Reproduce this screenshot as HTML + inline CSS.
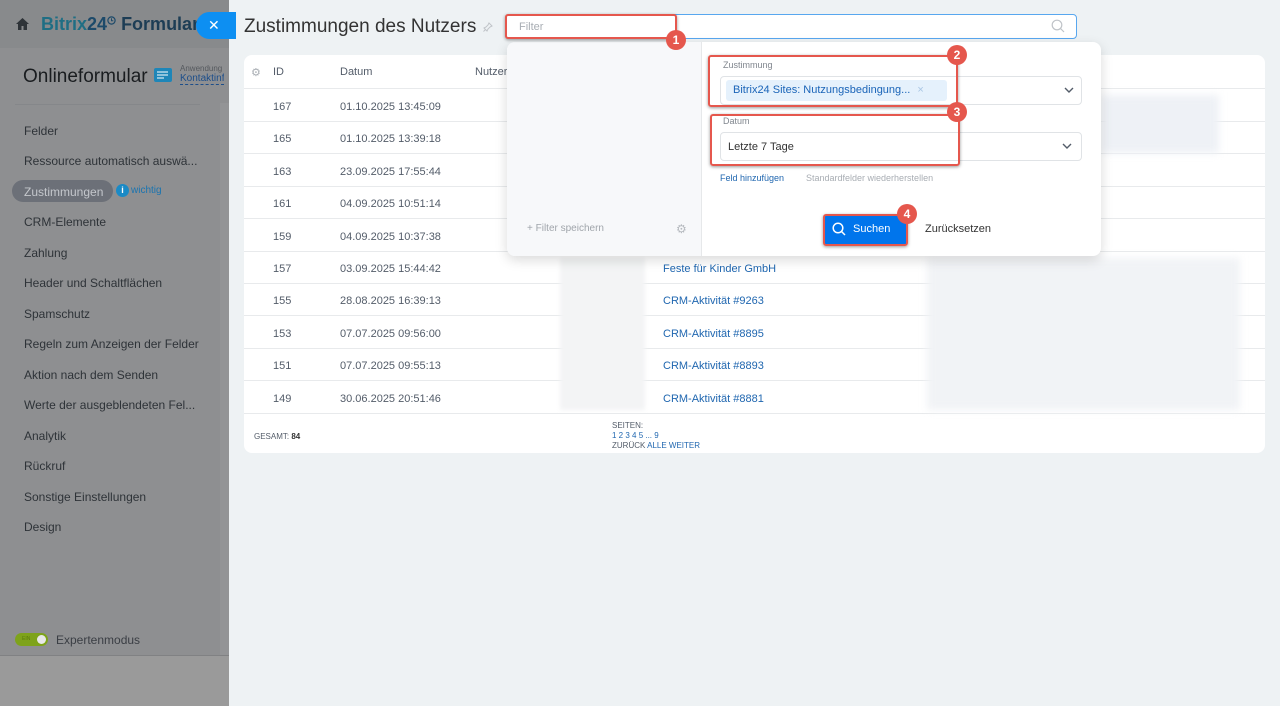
<!DOCTYPE html>
<html><head><meta charset="utf-8"><style>
*{box-sizing:border-box;margin:0;padding:0}
body{width:1280px;height:706px;overflow:hidden;font-family:"Liberation Sans",sans-serif;position:relative;background:#eef2f4}
.a{position:absolute}
.left{left:0;top:0;width:229px;height:706px;background:#8e8f91}
.nav{left:24px;font-size:12px;color:#2e3338;white-space:nowrap}
.row{left:244px;width:1021px;height:32px;border-bottom:1px solid #e8eaec;background:#fff;font-size:11px;color:#535c69}
.row span{position:absolute;top:11px}
.lnk{color:#2067b0}
.red{border:2px solid #e5574d;border-radius:3px;box-shadow:0 1px 3px rgba(0,0,0,.4)}
.badge{width:20px;height:20px;border-radius:50%;background:#e5574d;color:#fff;font-size:12px;font-weight:bold;text-align:center;line-height:20px}
</style></head><body>
<div class="a left"></div>
<div class="a" style="left:0;top:0;width:229px;height:48px;background:#888a8c"></div>
<div class="a" style="left:0;top:655px;width:229px;height:51px;background:#9a9a9a;border-top:1px solid #808183"></div>
<div class="a" style="left:220px;top:103px;width:9px;height:552px;background:#939496"></div>
<svg class="a" style="left:16px;top:18px" width="13" height="12" viewBox="0 0 13 12"><path d="M6.5 0L0 6h2v6h3.5V8h2v4H11V6h2z" fill="#2e3338"/></svg>
<div class="a" style="left:41px;top:14px;font-size:18px;font-weight:bold;color:#1f6e84;white-space:nowrap">Bitrix<span style="color:#1d4a6a">24</span><svg width="9" height="9" viewBox="0 0 9 9" style="vertical-align:top;margin-top:2px"><circle cx="4.5" cy="4.5" r="3.6" fill="none" stroke="#1d4a6a" stroke-width="1.2"/><path d="M4.5 2.3V4.7H6.3" fill="none" stroke="#1d4a6a" stroke-width="1"/></svg> <span style="color:#1d3d55">Formulare</span></div>
<div class="a" style="left:196px;top:12px;width:40px;height:27px;border-radius:14px 0 0 14px;background:#0d8ff2;color:#fff;font-size:14px;line-height:26px;padding-left:12px">✕</div>
<div class="a" style="left:23px;top:66px;font-size:19px;color:#1a1d20">Onlineformular</div>
<div class="a" style="left:154px;top:68px;width:18px;height:14px;background:#1e86b8;border-radius:2px"><div class="a" style="left:3px;top:3px;width:11px;height:1.5px;background:#8fc3dc"></div><div class="a" style="left:3px;top:6px;width:11px;height:1.5px;background:#8fc3dc"></div><div class="a" style="left:3px;top:9px;width:7px;height:1.5px;background:#8fc3dc"></div></div>
<div class="a" style="left:180px;top:64px;font-size:8px;color:#55595e">Anwendung</div>
<div class="a" style="left:180px;top:73px;font-size:10px;color:#1d4e8a;border-bottom:1px dashed #1d4e8a;width:44px;overflow:hidden;white-space:nowrap">Kontaktinfo</div>
<div class="a" style="left:15px;top:104px;width:185px;height:1px;background:#85878a"></div>
<div class="a nav" style="top:124px">Felder</div>
<div class="a nav" style="top:154px">Ressource automatisch auswä...</div>
<div class="a" style="left:12px;top:180px;width:101px;height:22px;border-radius:11px;background:#6c7078"></div>
<div class="a nav" style="top:185px;color:#c4c7cc">Zustimmungen</div>
<div class="a" style="left:116px;top:184px;width:13px;height:13px;border-radius:50%;background:#1a8ac6;color:#fff;font-size:9px;text-align:center;line-height:13px;font-weight:bold">i</div>
<div class="a" style="left:131px;top:185px;font-size:10px;color:#1a74b0">wichtig</div>
<div class="a nav" style="top:215px">CRM-Elemente</div>
<div class="a nav" style="top:246px">Zahlung</div>
<div class="a nav" style="top:276px">Header und Schaltflächen</div>
<div class="a nav" style="top:307px">Spamschutz</div>
<div class="a nav" style="top:337px">Regeln zum Anzeigen der Felder</div>
<div class="a nav" style="top:368px">Aktion nach dem Senden</div>
<div class="a nav" style="top:398px">Werte der ausgeblendeten Fel...</div>
<div class="a nav" style="top:429px">Analytik</div>
<div class="a nav" style="top:459px">Rückruf</div>
<div class="a nav" style="top:490px">Sonstige Einstellungen</div>
<div class="a nav" style="top:520px">Design</div>
<div class="a" style="left:15px;top:633px;width:33px;height:13px;border-radius:7px;background:#7ea31b"><div class="a" style="right:2px;top:2px;width:9px;height:9px;border-radius:50%;background:#e8e8e8"></div><span class="a" style="left:7px;top:3px;font-size:5px;color:#5a7a10">EIN</span></div>
<div class="a" style="left:56px;top:633px;font-size:12px;color:#3a3e44">Expertenmodus</div>

<div class="a" style="left:244px;top:16px;font-size:19px;color:#333">Zustimmungen des Nutzers</div>
<svg class="a" style="left:483px;top:22px" width="10" height="10" viewBox="0 0 10 10"><path d="M6 1l3 3-2 1-2 2-1 2-3-3 2-1 2-2z M2.5 7.5L0.5 9.5" fill="none" stroke="#c0c4c8" stroke-width="1"/></svg>
<div class="a" style="left:507px;top:14px;width:570px;height:25px;background:#fff;border:1px solid #58a7ef;border-radius:4px"></div>
<svg class="a" style="left:1051px;top:19px" width="14" height="14" viewBox="0 0 14 14"><circle cx="6" cy="6" r="4.8" fill="none" stroke="#bfc3c8" stroke-width="1.2"/><path d="M9.5 9.5L13 13" stroke="#bfc3c8" stroke-width="1.2"/></svg>

<div class="a" style="left:244px;top:55px;width:1021px;height:398px;background:#fff;border-radius:8px"></div>
<div class="a" style="left:244px;top:55px;width:1021px;height:34px;border-bottom:1px solid #e8eaec;font-size:11px;color:#535c69">
<span class="a" style="left:7px;top:11px;color:#a8adb3">⚙</span><span class="a" style="left:29px;top:11px">ID</span><span class="a" style="left:96px;top:11px">Datum</span><span class="a" style="left:231px;top:11px">Nutzer</span></div>
<div id="rows"></div>
<div class="a" style="left:244px;top:413px;width:1021px;height:40px;border-top:1px solid #e8eaec;font-size:8px;color:#535c69">
<span class="a" style="left:10px;top:18px">GESAMT: <b style="color:#333">84</b></span>
<span class="a" style="left:368px;top:7px;line-height:10px">SEITEN:<br><span class="lnk">1 2 3 4 5 ... 9</span><br>ZURÜCK <span class="lnk">ALLE WEITER</span></span></div>
<div class="a" style="left:560px;top:258px;width:85px;height:152px;background:#f3f4f5;filter:blur(2px)"></div>
<div class="a" style="left:927px;top:258px;width:313px;height:152px;background:#f1f3f6;filter:blur(4px)"></div>
<div class="a" style="left:1101px;top:95px;width:118px;height:58px;background:#eef1f6;filter:blur(4px)"></div>

<div class="a" style="left:507px;top:42px;width:594px;height:214px;background:#fff;border-radius:8px;box-shadow:0 4px 12px rgba(0,0,0,.15);overflow:hidden">
<div class="a" style="left:0;top:0;width:195px;height:214px;background:#f7f8fa;border-right:1px solid #e6e8ea"></div>
<div class="a" style="left:20px;top:181px;font-size:10px;color:#a0a5ab">+ Filter speichern</div>
<div class="a" style="left:169px;top:180px;font-size:12px;color:#b5b9be">⚙</div>
<div class="a" style="left:216px;top:18px;font-size:9px;color:#80868e">Zustimmung</div>
<div class="a" style="left:213px;top:34px;width:362px;height:29px;border:1px solid #e0e3e6;border-radius:4px"></div>
<div class="a" style="left:219px;top:38px;width:221px;height:21px;background:#e5f1fc;border-radius:3px;font-size:11px;color:#1a64b8;padding:4px 7px;white-space:nowrap;overflow:hidden">Bitrix24 Sites: Nutzungsbedingung... <span style="color:#a9c6e4;margin-left:4px">×</span></div>
<svg class="a" style="left:557px;top:45px" width="10" height="7" viewBox="0 0 10 7"><path d="M1 1l4 4 4-4" fill="none" stroke="#535c69" stroke-width="1.4"/></svg>
<div class="a" style="left:216px;top:74px;font-size:9px;color:#80868e">Datum</div>
<div class="a" style="left:213px;top:90px;width:362px;height:29px;border:1px solid #e0e3e6;border-radius:4px;font-size:11px;color:#333;padding:8px 7px">Letzte 7 Tage</div>
<svg class="a" style="left:555px;top:101px" width="10" height="7" viewBox="0 0 10 7"><path d="M1 1l4 4 4-4" fill="none" stroke="#535c69" stroke-width="1.4"/></svg>
<div class="a" style="left:213px;top:131px;font-size:9px;color:#2067b0">Feld hinzufügen</div>
<div class="a" style="left:299px;top:131px;font-size:9px;color:#a8adb3">Standardfelder wiederherstellen</div>
<div class="a" style="left:318px;top:173px;width:82px;height:29px;background:#0075ec;color:#fff;font-size:11px;padding:8px 0 0 28px">Suchen</div>
<svg class="a" style="left:325px;top:180px" width="14" height="14" viewBox="0 0 14 14"><circle cx="6" cy="6" r="4.8" fill="none" stroke="#fff" stroke-width="1.5"/><path d="M9.5 9.5L13 13" stroke="#fff" stroke-width="1.5"/></svg>
<div class="a" style="left:418px;top:181px;font-size:11px;color:#333">Zurücksetzen</div>
</div>

<div class="a red" style="left:505px;top:14px;width:172px;height:25px;background:#fff"><span class="a" style="left:12px;top:5px;font-size:11px;color:#a8adb3">Filter</span></div>
<div class="a badge" style="left:666px;top:30px">1</div>
<div class="a red" style="left:708px;top:55px;width:250px;height:52px"></div>
<div class="a badge" style="left:947px;top:45px">2</div>
<div class="a red" style="left:710px;top:114px;width:250px;height:52px"></div>
<div class="a badge" style="left:947px;top:102px">3</div>
<div class="a red" style="left:823px;top:214px;width:85px;height:32px;background:transparent"></div>
<div class="a badge" style="left:897px;top:204px">4</div>

<script>
var d=[["167","01.10.2025 13:45:09",""],["165","01.10.2025 13:39:18",""],["163","23.09.2025 17:55:44",""],["161","04.09.2025 10:51:14",""],["159","04.09.2025 10:37:38",""],["157","03.09.2025 15:44:42","Feste für Kinder GmbH"],["155","28.08.2025 16:39:13","CRM-Aktivität #9263"],["153","07.07.2025 09:56:00","CRM-Aktivität #8895"],["151","07.07.2025 09:55:13","CRM-Aktivität #8893"],["149","30.06.2025 20:51:46","CRM-Aktivität #8881"]];
var h="";d.forEach(function(r,i){h+='<div class="a row" style="top:'+(90+i*32.4)+'px"><span style="left:29px">'+r[0]+'</span><span style="left:96px">'+r[1]+'</span><span class="lnk" style="left:419px">'+r[2]+'</span></div>';});
document.getElementById("rows").outerHTML=h;
</script>
</body></html>
